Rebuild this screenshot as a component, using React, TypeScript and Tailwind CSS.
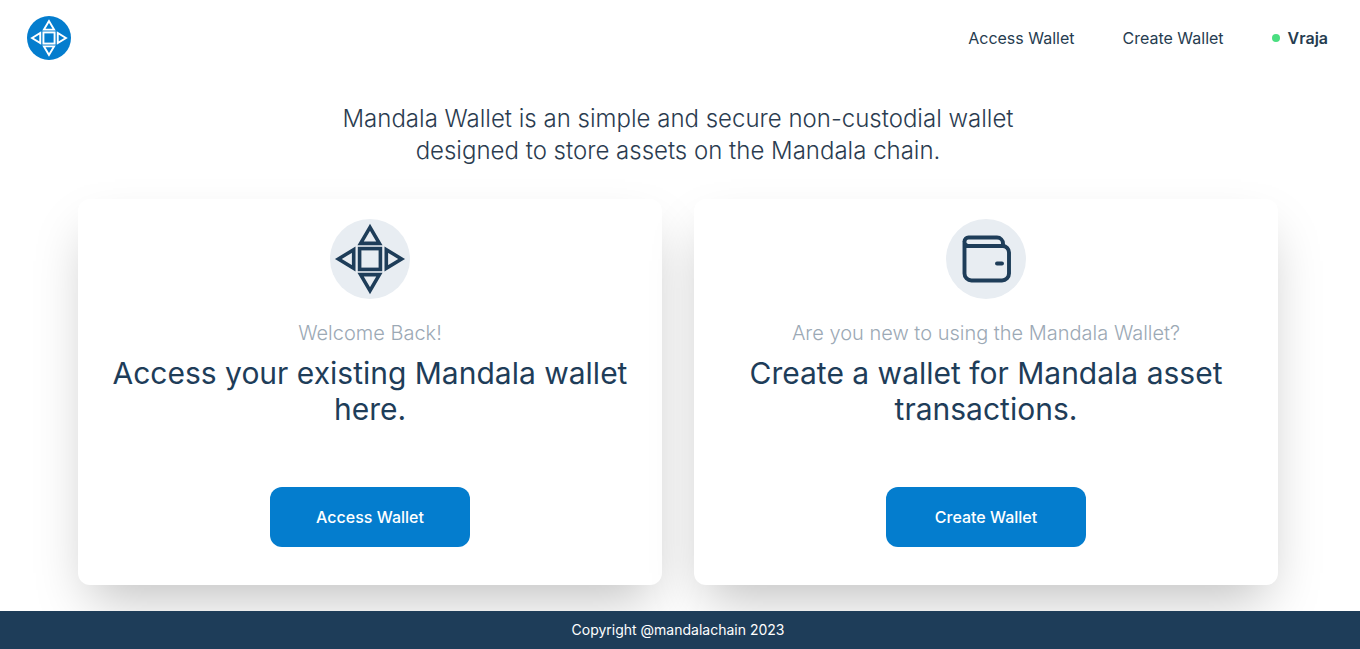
import type { ReactNode } from "react";

function MandalaMark({ className, viewBox }: { className: string; viewBox: string }) {
  return (
    <svg className={className} viewBox={viewBox} fill="none" stroke="currentColor" strokeWidth="3.6" strokeMiterlimit="10" aria-hidden="true">
      <path d="M40 8.400 30.600 24.400H49.400Z" />
      <path d="M40 71.600 30.600 55.600H49.400Z" />
      <path d="M8.400 40 23.700 30.600V49.400Z" />
      <path d="M71.600 40 56.300 30.600V49.400Z" />
      <rect x="29.600" y="29.600" width="20.800" height="20.800" />
    </svg>
  );
}

function WalletMark() {
  return (
    <svg className="size-20" viewBox="0 0 80 80" fill="none" stroke="currentColor" strokeWidth="3.9" strokeLinecap="round" strokeLinejoin="round" aria-hidden="true">
      <path d="M18.500 22.500V54.500a7 7 0 0 0 7 7H56a7 7 0 0 0 7-7V33.500a6.500 6.500 0 0 0-6.500-6.500H22.500a4 4 0 0 1-4-4.500a4 4 0 0 1 4-4H51a6 6 0 0 1 6 6V27" />
      <path d="M51 44.500H56" />
    </svg>
  );
}

interface CardProps {
  icon: ReactNode;
  lead: string;
  title: string;
  action: string;
}

function Card({ icon, lead, title, action }: CardProps) {
  return (
    <section className="flex flex-1 flex-col items-center rounded-xl bg-white px-8 pt-5 pb-[38px] text-center shadow-2xl">
      <div className="size-20 rounded-full bg-[#e8edf2]">{icon}</div>
      <p className="mt-5 text-xl leading-7 font-light text-[#9ca9b5]">{lead}</p>
      <h2 className="mt-2 min-h-[72px] text-3xl leading-9">{title}</h2>
      <button type="button" className="mt-15 h-15 w-50 rounded-xl bg-[#047dce] text-base font-medium text-white">
        {action}
      </button>
    </section>
  );
}

export default function App() {
  return (
    <div className="flex min-h-screen flex-col bg-white font-['Inter','Open_Sans',sans-serif] text-[#1e3d59]">
      <header className="flex items-center justify-between py-4 pr-8 pl-[27px]">
        <a href="#" aria-label="Mandala Wallet" className="block rounded-full bg-[#047dce] text-white">
          <MandalaMark className="size-11" viewBox="-1 -1 82 82" />
        </a>
        <nav className="flex items-center gap-12 text-base leading-6 text-[#263c50]">
          <a href="#access">Access Wallet</a>
          <a href="#create">Create Wallet</a>
          <a href="#account" className="flex items-center gap-2 font-semibold">
            <span className="size-2 rounded-full bg-[#4ade80]" />
            Vraja
          </a>
        </nav>
      </header>
      <main className="grow overflow-hidden pt-[27px] pr-1 pb-[26px]">
        <h1 className="mx-auto max-w-[700px] text-center text-2xl leading-8 font-light text-[#2b3c50]">
          Mandala Wallet is an simple and secure non-custodial wallet designed to store assets on the Mandala chain.
        </h1>
        <div className="mx-auto mt-8 flex max-w-[1200px] gap-8">
          <Card
            icon={<MandalaMark className="size-20" viewBox="0 0 80 80" />}
            lead="Welcome Back!"
            title="Access your existing Mandala wallet here."
            action="Access Wallet"
          />
          <Card
            icon={<WalletMark />}
            lead="Are you new to using the Mandala Wallet?"
            title="Create a wallet for Mandala asset transactions."
            action="Create Wallet"
          />
        </div>
      </main>
      <footer className="bg-[#1e3d59] py-[9px] pr-1 text-center text-sm leading-5 text-white">
        Copyright @mandalachain 2023
      </footer>
    </div>
  );
}
